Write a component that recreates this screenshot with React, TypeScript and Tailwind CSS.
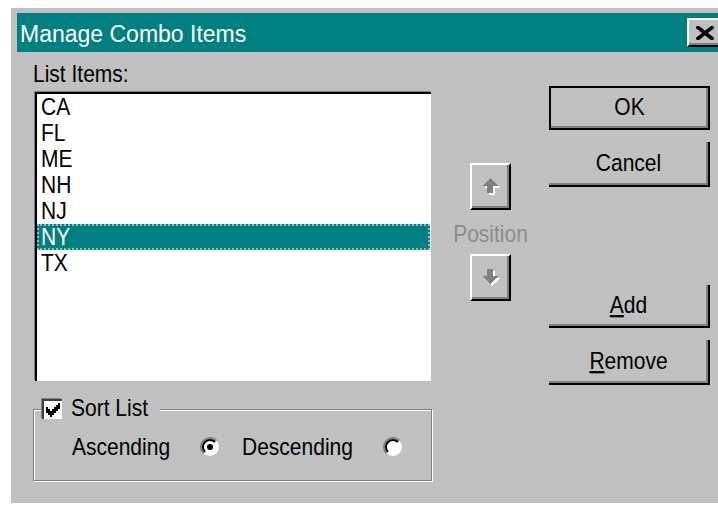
import type { ReactNode } from 'react'
import clsx from 'clsx'

const items = ['CA', 'FL', 'ME', 'NH', 'NJ', 'NY', 'TX']
const selected = 'NY'

// the dialog font is taller than Arial at the same width, so stretch the glyphs a little
const Txt = ({ children }: { children: ReactNode }) => (
  <span className="inline-block scale-y-[1.12]">{children}</span>
)

const PushButton = ({
  children,
  isDefault,
  className,
}: {
  children: ReactNode
  isDefault?: boolean
  className?: string
}) => (
  <button
    className={clsx(
      'flex w-[161px] items-center justify-center bg-[#c0c0c0] pb-[2px] text-[21px] leading-[24px] text-black shadow-[inset_-2px_-2px_0_#808080]',
      isDefault ? 'border-2 border-black' : 'border-r-2 border-b-2 border-black',
      className
    )}
  >
    <Txt>{children}</Txt>
  </button>
)

const ArrowButton = ({ children }: { children: ReactNode }) => (
  <button className="flex h-[47px] w-[41px] items-center justify-center border-2 border-t-white border-l-white border-r-black border-b-black bg-[#c0c0c0] shadow-[inset_-2px_-2px_0_#808080]">
    {children}
  </button>
)

const UpArrow = () => (
  <svg width="18" height="17" viewBox="0 0 18 17" shapeRendering="crispEdges">
    <polygon points="10,2 18,10 13,10 13,17 7,17 7,10 2,10" fill="#ffffff" />
    <polygon points="8,0 16,8 11,8 11,15 5,15 5,8 0,8" fill="#808080" />
  </svg>
)

const DownArrow = () => (
  <svg width="18" height="17" viewBox="0 0 18 17" shapeRendering="crispEdges">
    <polygon points="7,2 13,2 13,9 18,9 10,17 2,9 7,9" fill="#ffffff" />
    <polygon points="5,0 11,0 11,7 16,7 8,15 0,7 5,7" fill="#808080" />
  </svg>
)

const Radio = ({ checked }: { checked?: boolean }) => (
  <svg width="20" height="20" viewBox="0 0 20 20">
    <circle cx="10" cy="10" r="9" fill="#ffffff" />
    <path d="M3.6 16.4 A9 9 0 0 1 16.4 3.6" fill="none" stroke="#808080" strokeWidth="2" />
    <path d="M5 15 A7 7 0 0 1 15 5" fill="none" stroke="#000000" strokeWidth="2" />
    {checked && <circle cx="10" cy="10" r="3" fill="#000000" />}
  </svg>
)

const Checkbox = () => (
  <div className="flex h-[20px] w-[20px] items-center justify-center border-t-2 border-l-2 border-t-[#404040] border-l-[#404040] bg-white shadow-[-1px_-1px_0_#808080]">
    <svg width="14" height="14" viewBox="0 0 7 7" shapeRendering="crispEdges">
      <polygon
        points="6,0 7,0 7,3 6,3 6,4 5,4 5,5 4,5 4,6 3,6 3,7 2,7 2,6 1,6 1,5 0,5 0,2 1,2 1,3 2,3 2,4 3,4 3,3 4,3 4,2 5,2 5,1 6,1"
        fill="#000000"
      />
    </svg>
  </div>
)

export default function App() {
  return (
    <div className="h-[506px] w-[718px] overflow-hidden bg-white pt-[8px] pl-[11px] font-['Liberation_Sans',Arial,sans-serif] text-black">
      <div className="h-[495px] w-[724px] bg-[#c0c0c0] pt-[5px]">
        {/* title bar */}
        <div className="mx-[6px] flex h-[39px] items-center justify-between bg-[#008080]">
          <span className="pl-[3px] pt-[2px] text-[23px] leading-[26px] text-white">Manage Combo Items</span>
          <button className="mr-[6px] flex h-[29px] w-[36px] items-center justify-center border-2 border-t-white border-l-white border-r-black border-b-black bg-[#c0c0c0] shadow-[inset_-2px_-2px_0_#808080]">
            <svg width="18" height="14" viewBox="0 0 18 14">
              <path d="M2 1.5 L16 12.5 M16 1.5 L2 12.5" stroke="#000000" strokeWidth="3.6" strokeLinecap="square" />
            </svg>
          </button>
        </div>

        <div className="flex pl-[22px] pt-[10px] text-[21px] leading-[24px]">
          {/* list and sort options */}
          <div className="w-[399px]">
            <div className="h-[24px]">
              <Txt>List Items:</Txt>
            </div>
            <div className="ml-[2px] mt-[6px] h-[289px] w-[396px] border-t-2 border-l-2 border-black bg-white shadow-[-1px_-1px_0_#808080]">
              {items.map((item) => (
                <div
                  key={item}
                  className={clsx(
                    'mr-[1px] h-[26px] pl-[4px] leading-[26px]',
                    item === selected &&
                      'bg-[#008080] text-white outline-2 -outline-offset-2 outline-dotted outline-[#7fc4c4]'
                  )}
                >
                  <Txt>{item}</Txt>
                </div>
              ))}
            </div>

            <fieldset className="mt-[17px] border border-[#808080] pb-[21px] shadow-[inset_1px_1px_0_#ffffff,1px_1px_0_#ffffff]">
              <legend className="ml-[8px] bg-[#c0c0c0] pr-[12px]">
                <div className="flex h-[22px] items-center gap-[9px]">
                  <Checkbox />
                  <span className="-mt-[3px]">
                    <Txt>Sort List</Txt>
                  </span>
                </div>
              </legend>
              <div className="mt-[15px] flex h-[24px] items-center pl-[38px]">
                <span className="w-[128px]">
                  <Txt>Ascending</Txt>
                </span>
                <Radio checked />
                <span className="ml-[22px] w-[141px]">
                  <Txt>Descending</Txt>
                </span>
                <Radio />
              </div>
            </fieldset>
          </div>

          {/* move up / down */}
          <div className="flex w-[117px] flex-col items-center pt-[101px]">
            <ArrowButton>
              <UpArrow />
            </ArrowButton>
            <div className="mt-[12px] h-[24px] text-[#8c8c8c]">
              <Txt>Position</Txt>
            </div>
            <div className="mt-[8px]">
              <ArrowButton>
                <DownArrow />
              </ArrowButton>
            </div>
          </div>

          {/* dialog actions */}
          <div className="flex w-[161px] flex-col pt-[24px]">
            <PushButton isDefault className="h-[44px]">
              OK
            </PushButton>
            <PushButton className="mt-[12px] h-[45px]">Cancel</PushButton>
            <PushButton className="mt-[98px] h-[43px]">
              <u className="underline decoration-2 underline-offset-2">A</u>dd
            </PushButton>
            <PushButton className="mt-[12px] h-[45px]">
              <u className="underline decoration-2 underline-offset-2">R</u>emove
            </PushButton>
          </div>
        </div>
      </div>
    </div>
  )
}
